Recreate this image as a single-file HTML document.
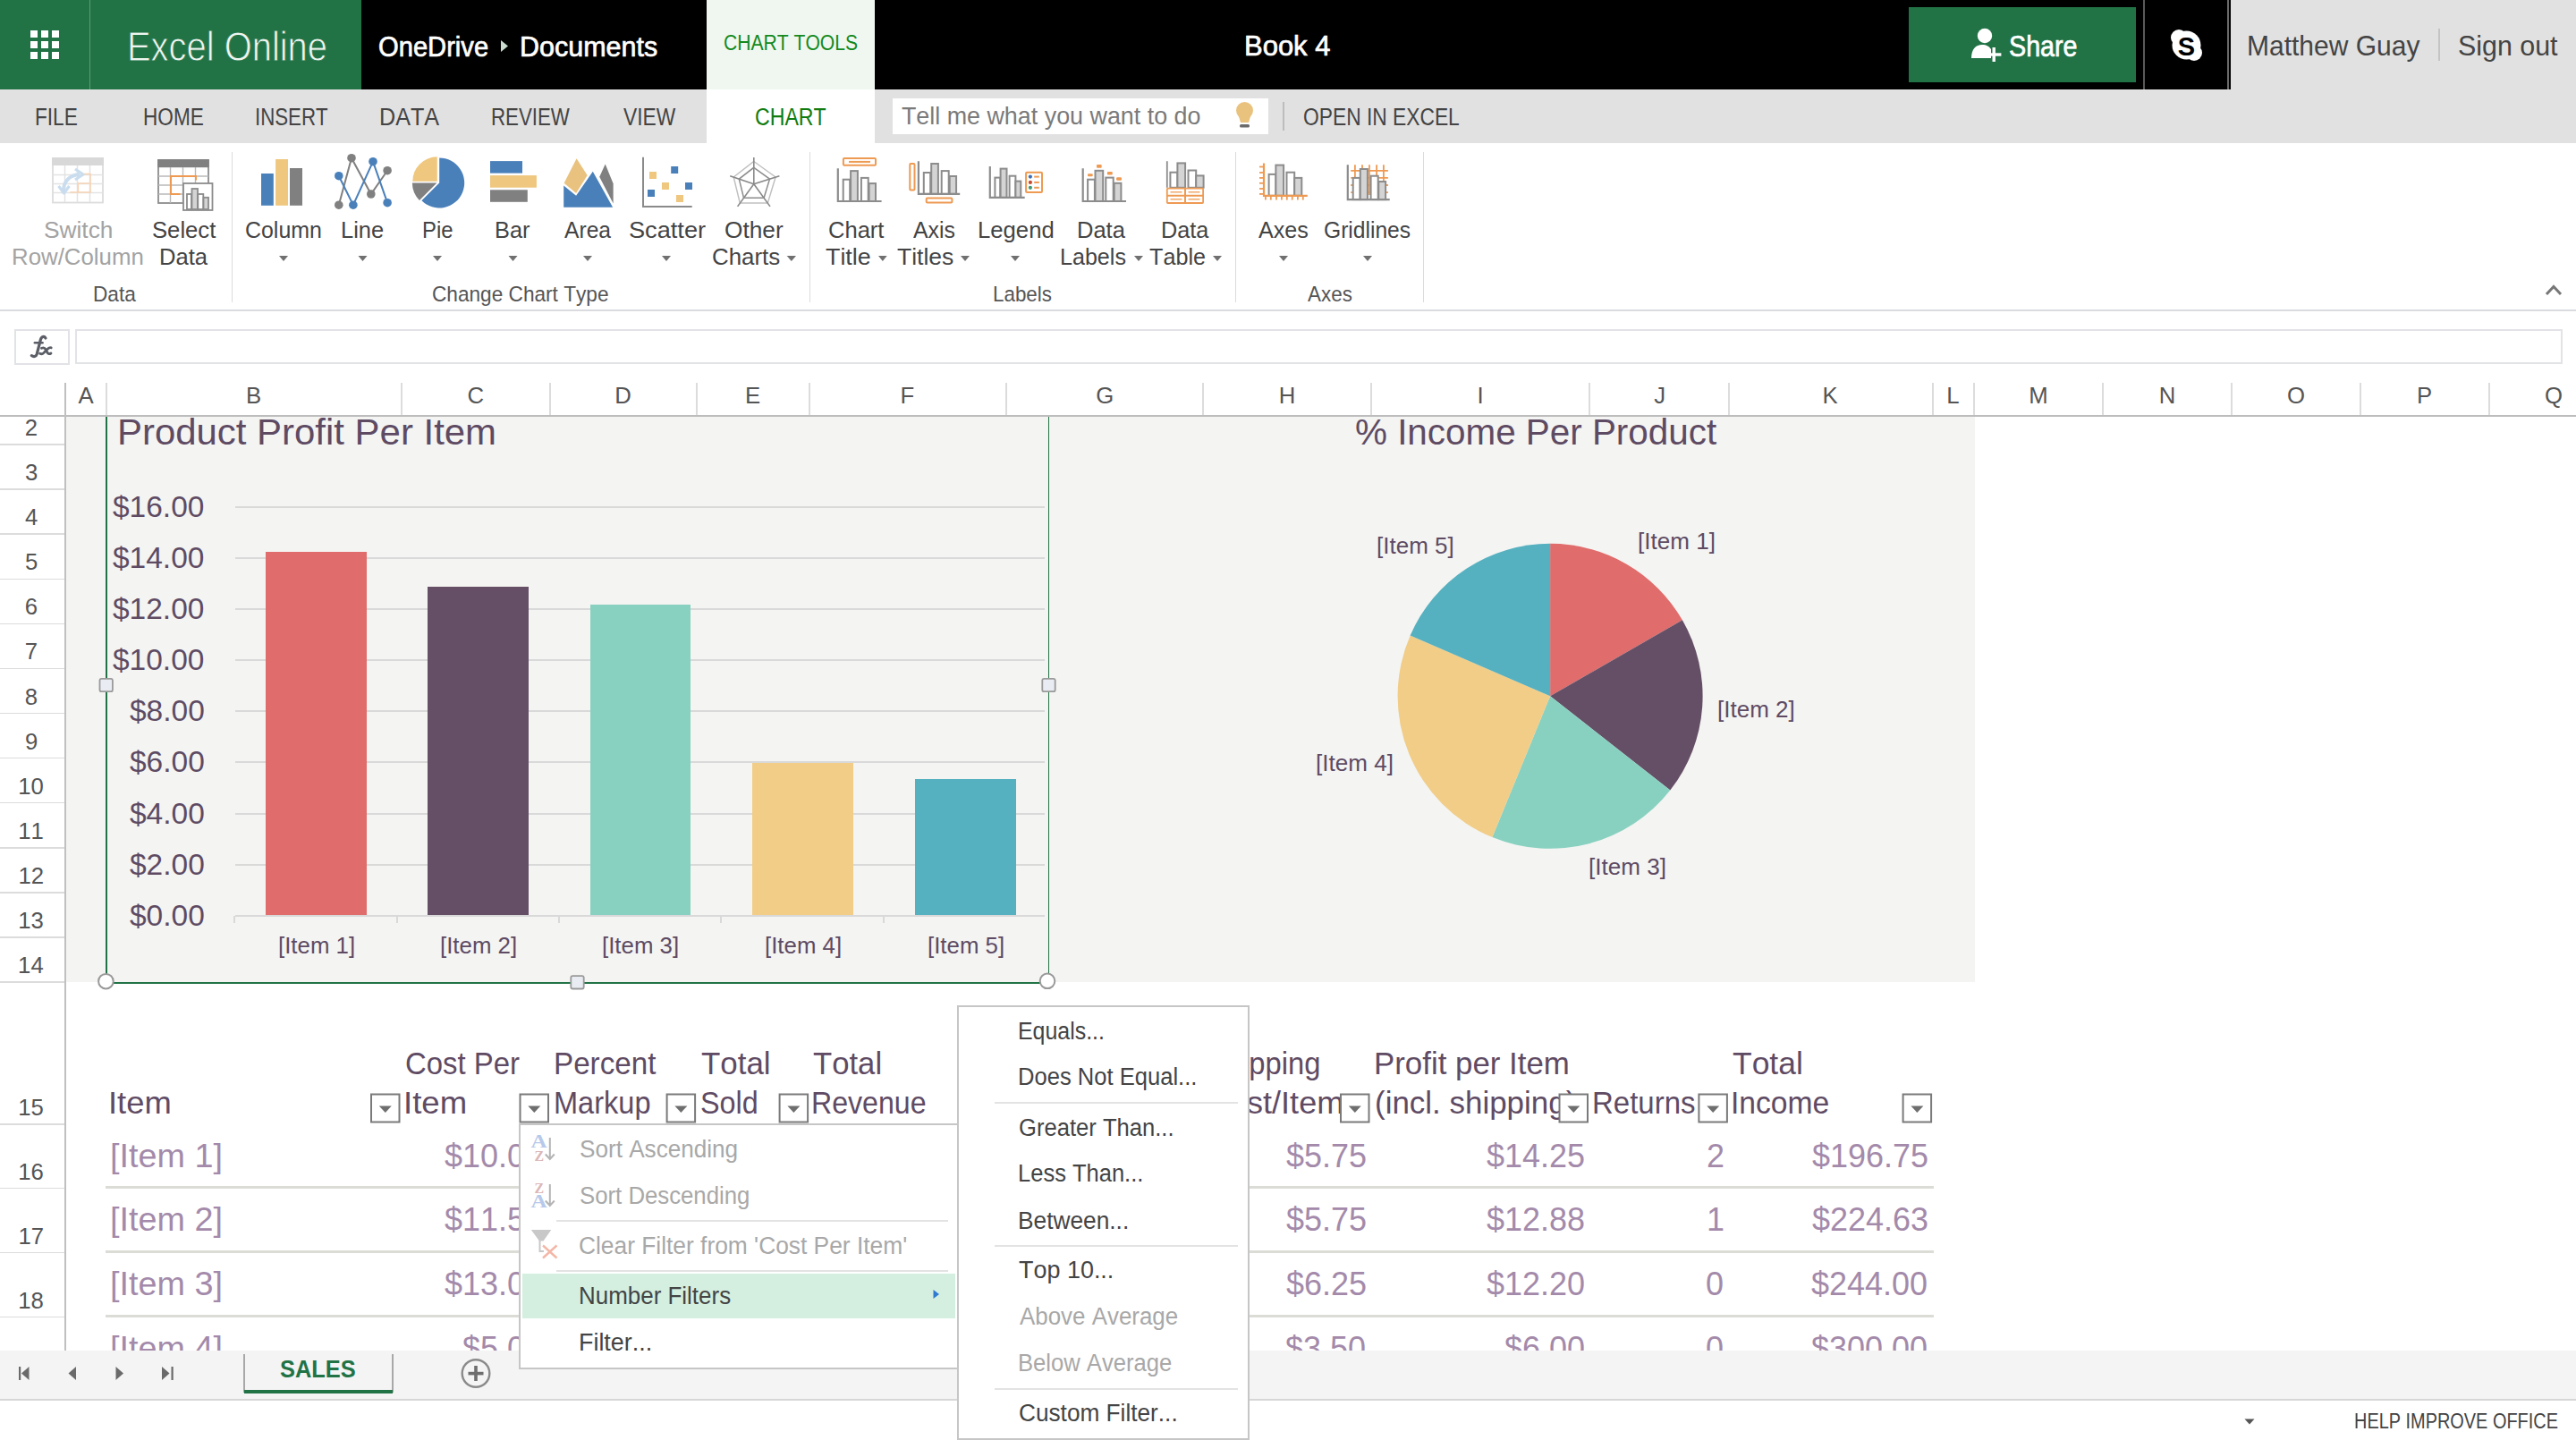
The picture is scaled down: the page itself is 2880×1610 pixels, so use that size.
<!DOCTYPE html>
<html><head><meta charset="utf-8"><style>
html,body{margin:0;padding:0;}
body{width:2880px;height:1610px;position:relative;overflow:hidden;background:#fff;font-family:"Liberation Sans",sans-serif;font-kerning:none;}
.t{position:absolute;white-space:pre;transform-origin:0 0;}
svg{overflow:visible;}
</style></head><body>

<div style="position:absolute;left:0.0px;top:0.0px;width:404.0px;height:100.0px;background:#217346;"></div>
<div style="position:absolute;left:100.0px;top:0.0px;width:1.0px;height:100.0px;background:#5c9c76;"></div>
<div style="position:absolute;left:34.0px;top:34.0px;width:8.0px;height:8.0px;background:#ffffff;"></div>
<div style="position:absolute;left:34.0px;top:46.0px;width:8.0px;height:8.0px;background:#ffffff;"></div>
<div style="position:absolute;left:34.0px;top:58.0px;width:8.0px;height:8.0px;background:#ffffff;"></div>
<div style="position:absolute;left:46.0px;top:34.0px;width:8.0px;height:8.0px;background:#ffffff;"></div>
<div style="position:absolute;left:46.0px;top:46.0px;width:8.0px;height:8.0px;background:#ffffff;"></div>
<div style="position:absolute;left:46.0px;top:58.0px;width:8.0px;height:8.0px;background:#ffffff;"></div>
<div style="position:absolute;left:58.0px;top:34.0px;width:8.0px;height:8.0px;background:#ffffff;"></div>
<div style="position:absolute;left:58.0px;top:46.0px;width:8.0px;height:8.0px;background:#ffffff;"></div>
<div style="position:absolute;left:58.0px;top:58.0px;width:8.0px;height:8.0px;background:#ffffff;"></div>
<div class="t" style="left:141.7px;top:29.2px;font-size:46.51px;line-height:46.51px;color:#eef5ef;transform:scaleX(0.8581);-webkit-text-stroke:0.9px #217346;paint-order:normal;">Excel Online</div>
<div style="position:absolute;left:404.0px;top:0.0px;width:2090.0px;height:100.0px;background:#000000;"></div>
<div class="t" style="left:423.1px;top:35.7px;font-size:31.98px;line-height:31.98px;color:#ffffff;transform:scaleX(0.9120);-webkit-text-stroke:0.7px #fff;">OneDrive</div>
<svg style="position:absolute;left:555px;top:40px;" width="20" height="22" viewBox="555 40 20 22"><path d="M560 45 L568 51.5 L560 58 Z" fill="#c9dccf"/></svg>
<div class="t" style="left:580.5px;top:35.7px;font-size:31.98px;line-height:31.98px;color:#ffffff;transform:scaleX(0.9535);-webkit-text-stroke:0.7px #fff;">Documents</div>
<div style="position:absolute;left:790.0px;top:0.0px;width:188.0px;height:100.0px;background:#eff7f0;"></div>
<div class="t" style="left:808.9px;top:36.6px;font-size:23.26px;line-height:23.26px;color:#14891c;transform:scaleX(0.9072);">CHART TOOLS</div>
<div class="t" style="left:1390.5px;top:35.3px;font-size:31.98px;line-height:31.98px;color:#ffffff;transform:scaleX(0.9688);-webkit-text-stroke:0.7px #fff;">Book 4</div>
<div style="position:absolute;left:2134.0px;top:8.0px;width:254.0px;height:84.0px;background:#217346;"></div>
<svg style="position:absolute;left:2200px;top:28px;" width="44" height="46" viewBox="2200 28 44 46"><circle cx="2219" cy="40" r="8.2" fill="#fff"/><path d="M2204 65 C2204 55 2209 50 2216 50 C2221 50 2224 52 2226 55 L2226 65 Z" fill="#fff"/><rect x="2227.5" y="53" width="3.4" height="16" fill="#fff"/><rect x="2221" y="59.3" width="16.4" height="3.4" fill="#fff"/><path d="M2226 55 L2222 60 L2222 65" stroke="#217346" stroke-width="0" fill="none"/></svg>
<div class="t" style="left:2245.7px;top:34.0px;font-size:34.01px;line-height:34.01px;color:#ffffff;transform:scaleX(0.8438);-webkit-text-stroke:0.7px #fff;">Share</div>
<div style="position:absolute;left:2396.0px;top:0.0px;width:2.0px;height:100.0px;background:#5a5a5a;"></div>
<svg style="position:absolute;left:2422px;top:28px;" width="46" height="46" viewBox="2422 28 46 46"><circle cx="2436" cy="42" r="9" fill="#fff"/><circle cx="2453" cy="59" r="9" fill="#fff"/><circle cx="2444.5" cy="50.5" r="16" fill="#fff"/><text x="2444.5" y="61.5" font-family="Liberation Sans" font-weight="bold" font-size="29" text-anchor="middle" fill="#000">S</text></svg>
<div style="position:absolute;left:2490.0px;top:0.0px;width:2.0px;height:100.0px;background:#6a6a6a;"></div>
<div style="position:absolute;left:2494.0px;top:0.0px;width:386.0px;height:100.0px;background:#e1e1e1;"></div>
<div class="t" style="left:2511.5px;top:35.3px;font-size:31.98px;line-height:31.98px;color:#444444;transform:scaleX(0.9387);">Matthew Guay</div>
<div style="position:absolute;left:2726.0px;top:32.0px;width:2.0px;height:36.0px;background:#c4c4c4;"></div>
<div class="t" style="left:2747.6px;top:35.3px;font-size:31.98px;line-height:31.98px;color:#444444;transform:scaleX(0.9511);">Sign out</div>
<div style="position:absolute;left:0.0px;top:100.0px;width:2880.0px;height:60.0px;background:#e1e1e1;"></div>
<div style="position:absolute;left:790.0px;top:100.0px;width:188.0px;height:60.0px;background:#ffffff;"></div>
<div class="t" style="left:39.1px;top:116.9px;font-size:27.62px;line-height:27.62px;color:#444444;transform:scaleX(0.8201);">FILE</div>
<div class="t" style="left:160.1px;top:116.9px;font-size:27.62px;line-height:27.62px;color:#444444;transform:scaleX(0.8187);">HOME</div>
<div class="t" style="left:284.9px;top:116.9px;font-size:27.62px;line-height:27.62px;color:#444444;transform:scaleX(0.8054);">INSERT</div>
<div class="t" style="left:423.9px;top:116.9px;font-size:27.62px;line-height:27.62px;color:#444444;transform:scaleX(0.9112);">DATA</div>
<div class="t" style="left:549.2px;top:116.9px;font-size:27.62px;line-height:27.62px;color:#444444;transform:scaleX(0.8069);">REVIEW</div>
<div class="t" style="left:696.9px;top:116.9px;font-size:27.62px;line-height:27.62px;color:#444444;transform:scaleX(0.8243);">VIEW</div>
<div class="t" style="left:843.8px;top:116.9px;font-size:27.62px;line-height:27.62px;color:#107c10;transform:scaleX(0.8380);">CHART</div>
<div style="position:absolute;left:998.0px;top:110.0px;width:420.0px;height:40.0px;background:#ffffff;"></div>
<div class="t" style="left:1007.9px;top:117.2px;font-size:26.89px;line-height:26.89px;color:#7a7a7a;">Tell me what you want to do</div>
<svg style="position:absolute;left:1376px;top:110px;" width="32" height="40" viewBox="1376 110 32 40"><circle cx="1391.5" cy="123.5" r="9.5" fill="#e9c27e"/><path d="M1384 127 L1399 127 L1396 137 L1387 137 Z" fill="#e9c27e"/><rect x="1386" y="139" width="11" height="3.5" rx="1.5" fill="#6b6b6b"/></svg>
<div style="position:absolute;left:1434.0px;top:114.0px;width:2.0px;height:32.0px;background:#bdbdbd;"></div>
<div class="t" style="left:1456.9px;top:116.9px;font-size:27.62px;line-height:27.62px;color:#444444;transform:scaleX(0.8255);">OPEN IN EXCEL</div>
<div style="position:absolute;left:0.0px;top:346.0px;width:2880.0px;height:2.0px;background:#dadbde;"></div>
<div style="position:absolute;left:258.5px;top:170.0px;width:1.5px;height:168.0px;background:#dcdcdc;"></div>
<div style="position:absolute;left:904.5px;top:170.0px;width:1.5px;height:168.0px;background:#dcdcdc;"></div>
<div style="position:absolute;left:1380.5px;top:170.0px;width:1.5px;height:168.0px;background:#dcdcdc;"></div>
<div style="position:absolute;left:1590.5px;top:170.0px;width:1.5px;height:168.0px;background:#dcdcdc;"></div>
<div class="t" style="left:48.8px;top:244.0px;font-size:26.16px;line-height:26.16px;color:#a3a3a3;transform:scaleX(1.0044);">Switch</div>
<div class="t" style="left:12.9px;top:273.8px;font-size:26.16px;line-height:26.16px;color:#a3a3a3;transform:scaleX(0.9869);">Row/Column</div>
<div class="t" style="left:169.8px;top:244.0px;font-size:26.16px;line-height:26.16px;color:#444444;transform:scaleX(0.9813);">Select</div>
<div class="t" style="left:177.9px;top:273.8px;font-size:26.16px;line-height:26.16px;color:#444444;transform:scaleX(0.9790);">Data</div>
<div class="t" style="left:273.7px;top:244.0px;font-size:26.16px;line-height:26.16px;color:#444444;transform:scaleX(0.9527);">Column</div>
<svg style="position:absolute;left:311px;top:285px;" width="13" height="9" viewBox="311 285 13 9"><path d="M312 286 L322 286 L317.0 292 Z" fill="#707070"/></svg>
<div class="t" style="left:380.9px;top:244.0px;font-size:26.16px;line-height:26.16px;color:#444444;transform:scaleX(0.9750);">Line</div>
<svg style="position:absolute;left:399px;top:285px;" width="13" height="9" viewBox="399 285 13 9"><path d="M400.5 286 L410.5 286 L405.5 292 Z" fill="#707070"/></svg>
<div class="t" style="left:471.5px;top:244.0px;font-size:26.16px;line-height:26.16px;color:#444444;transform:scaleX(0.9129);">Pie</div>
<svg style="position:absolute;left:483px;top:285px;" width="13" height="9" viewBox="483 285 13 9"><path d="M484 286 L494 286 L489.0 292 Z" fill="#707070"/></svg>
<div class="t" style="left:553.4px;top:244.0px;font-size:26.16px;line-height:26.16px;color:#444444;transform:scaleX(0.9677);">Bar</div>
<svg style="position:absolute;left:567px;top:285px;" width="13" height="9" viewBox="567 285 13 9"><path d="M568.5 286 L578.5 286 L573.5 292 Z" fill="#707070"/></svg>
<div class="t" style="left:631.0px;top:244.0px;font-size:26.16px;line-height:26.16px;color:#444444;transform:scaleX(0.9418);">Area</div>
<svg style="position:absolute;left:651px;top:285px;" width="13" height="9" viewBox="651 285 13 9"><path d="M652 286 L662 286 L657.0 292 Z" fill="#707070"/></svg>
<div class="t" style="left:702.8px;top:244.0px;font-size:26.16px;line-height:26.16px;color:#444444;transform:scaleX(1.0386);">Scatter</div>
<svg style="position:absolute;left:739px;top:285px;" width="13" height="9" viewBox="739 285 13 9"><path d="M740 286 L750 286 L745.0 292 Z" fill="#707070"/></svg>
<div class="t" style="left:809.8px;top:244.0px;font-size:26.16px;line-height:26.16px;color:#444444;transform:scaleX(1.0038);">Other</div>
<div class="t" style="left:795.7px;top:273.8px;font-size:26.16px;line-height:26.16px;color:#444444;transform:scaleX(0.9895);">Charts</div>
<svg style="position:absolute;left:878px;top:285px;" width="13" height="9" viewBox="878 285 13 9"><path d="M879.7 286 L890 286 L884.85 292 Z" fill="#707070"/></svg>
<div class="t" style="left:925.7px;top:244.0px;font-size:26.16px;line-height:26.16px;color:#444444;transform:scaleX(0.9767);">Chart</div>
<div class="t" style="left:923.2px;top:273.8px;font-size:26.16px;line-height:26.16px;color:#444444;transform:scaleX(1.0257);">Title</div>
<svg style="position:absolute;left:981px;top:285px;" width="12" height="9" viewBox="981 285 12 9"><path d="M982 286 L991.7 286 L986.85 292 Z" fill="#707070"/></svg>
<div class="t" style="left:1021.0px;top:244.0px;font-size:26.16px;line-height:26.16px;color:#444444;transform:scaleX(0.9498);">Axis</div>
<div class="t" style="left:1003.4px;top:273.8px;font-size:26.16px;line-height:26.16px;color:#444444;transform:scaleX(1.0135);">Titles</div>
<svg style="position:absolute;left:1073px;top:285px;" width="13" height="9" viewBox="1073 285 13 9"><path d="M1074 286 L1084 286 L1079.0 292 Z" fill="#707070"/></svg>
<div class="t" style="left:1092.6px;top:244.0px;font-size:26.16px;line-height:26.16px;color:#444444;transform:scaleX(0.9824);">Legend</div>
<svg style="position:absolute;left:1129px;top:285px;" width="13" height="9" viewBox="1129 285 13 9"><path d="M1130 286 L1140 286 L1135.0 292 Z" fill="#707070"/></svg>
<div class="t" style="left:1203.5px;top:244.0px;font-size:26.16px;line-height:26.16px;color:#444444;transform:scaleX(0.9752);">Data</div>
<div class="t" style="left:1184.9px;top:273.8px;font-size:26.16px;line-height:26.16px;color:#444444;transform:scaleX(0.9594);">Labels</div>
<svg style="position:absolute;left:1267px;top:285px;" width="13" height="9" viewBox="1267 285 13 9"><path d="M1268 286 L1278 286 L1273.0 292 Z" fill="#707070"/></svg>
<div class="t" style="left:1297.6px;top:244.0px;font-size:26.16px;line-height:26.16px;color:#444444;transform:scaleX(0.9658);">Data</div>
<div class="t" style="left:1285.1px;top:273.8px;font-size:26.16px;line-height:26.16px;color:#444444;transform:scaleX(0.9624);">Table</div>
<svg style="position:absolute;left:1355px;top:285px;" width="13" height="9" viewBox="1355 285 13 9"><path d="M1356 286 L1366 286 L1361.0 292 Z" fill="#707070"/></svg>
<div class="t" style="left:1406.6px;top:244.0px;font-size:26.16px;line-height:26.16px;color:#444444;transform:scaleX(0.9603);">Axes</div>
<svg style="position:absolute;left:1429px;top:285px;" width="13" height="9" viewBox="1429 285 13 9"><path d="M1430 286 L1440 286 L1435.0 292 Z" fill="#707070"/></svg>
<div class="t" style="left:1479.8px;top:244.0px;font-size:26.16px;line-height:26.16px;color:#444444;transform:scaleX(0.9409);">Gridlines</div>
<svg style="position:absolute;left:1523px;top:285px;" width="13" height="9" viewBox="1523 285 13 9"><path d="M1524 286 L1534 286 L1529.0 292 Z" fill="#707070"/></svg>
<div class="t" style="left:104.1px;top:318.1px;font-size:23.26px;line-height:23.26px;color:#555555;transform:scaleX(0.9743);">Data</div>
<div class="t" style="left:482.9px;top:318.1px;font-size:23.26px;line-height:23.26px;color:#555555;transform:scaleX(0.9734);">Change Chart Type</div>
<div class="t" style="left:1109.7px;top:318.1px;font-size:23.26px;line-height:23.26px;color:#555555;transform:scaleX(0.9623);">Labels</div>
<div class="t" style="left:1462.0px;top:318.1px;font-size:23.26px;line-height:23.26px;color:#555555;transform:scaleX(0.9643);">Axes</div>
<svg style="position:absolute;left:2840px;top:312px;" width="30" height="24" viewBox="2840 312 30 24"><path d="M2847 329 L2855 320.5 L2863 329" stroke="#777" stroke-width="3" fill="none"/></svg>
<svg style="position:absolute;left:55px;top:173px;" width="64" height="58" viewBox="55 173 64 58"><rect x="59" y="177" width="56" height="49.5" fill="#fff" stroke="#dcdcdc" stroke-width="1.8"/><rect x="58" y="176" width="58" height="9" fill="#d8d8d8"/><line x1="59" y1="195.5" x2="115" y2="195.5" stroke="#e3e3e3" stroke-width="1.5"/><line x1="59" y1="205.5" x2="115" y2="205.5" stroke="#e3e3e3" stroke-width="1.5"/><line x1="59" y1="215.5" x2="115" y2="215.5" stroke="#e3e3e3" stroke-width="1.5"/><line x1="72.5" y1="185" x2="72.5" y2="226" stroke="#e3e3e3" stroke-width="1.5"/><line x1="86.5" y1="185" x2="86.5" y2="226" stroke="#e3e3e3" stroke-width="1.5"/><line x1="100.5" y1="185" x2="100.5" y2="226" stroke="#e3e3e3" stroke-width="1.5"/><path d="M78.3 215 L101 215 L101 194.5 L94 194.5 M87.3 215 L87.3 205 L101 205" fill="none" stroke="#f7d3b5" stroke-width="1.6"/><path d="M71 213 C71 203 78 195.5 89 195" stroke="#c9ddef" stroke-width="4" fill="none"/><path d="M84 189 L93 195 L84 201" stroke="#c9ddef" stroke-width="3.2" fill="none" stroke-linejoin="round"/><path d="M65.5 208 L71.5 216 L77.5 208" stroke="#c9ddef" stroke-width="3.2" fill="none" stroke-linejoin="round"/></svg>
<svg style="position:absolute;left:173px;top:174px;" width="68" height="64" viewBox="173 174 68 64"><rect x="177" y="179" width="56" height="48" fill="#fff" stroke="#8c8c8c" stroke-width="1.8"/><rect x="176.2" y="178.2" width="57.5" height="9" fill="#808080"/><line x1="177" y1="197" x2="233" y2="197" stroke="#b8b8b8" stroke-width="1.4"/><line x1="177" y1="207" x2="233" y2="207" stroke="#b8b8b8" stroke-width="1.4"/><line x1="177" y1="217" x2="233" y2="217" stroke="#b8b8b8" stroke-width="1.4"/><line x1="190.5" y1="187" x2="190.5" y2="227" stroke="#b8b8b8" stroke-width="1.4"/><line x1="204.5" y1="187" x2="204.5" y2="227" stroke="#b8b8b8" stroke-width="1.4"/><line x1="218.5" y1="187" x2="218.5" y2="227" stroke="#b8b8b8" stroke-width="1.4"/><path d="M219 201.5 L219 197 L191 197 L191 217 L201.5 217" stroke="#ee9a52" stroke-width="2" fill="none"/><rect x="205" y="205" width="32.5" height="30" fill="#fff" stroke="#8c8c8c" stroke-width="1.8"/><rect x="209" y="217" width="5" height="17" fill="#fff" stroke="#8c8c8c" stroke-width="1.8"/><rect x="214.5" y="211" width="6.5" height="23" fill="#d4d4d4" stroke="#8c8c8c" stroke-width="1.8"/><rect x="221.3" y="217" width="6" height="17" fill="#fff" stroke="#8c8c8c" stroke-width="1.8"/><rect x="227.5" y="220.8" width="5.5" height="13.2" fill="#d4d4d4" stroke="#8c8c8c" stroke-width="1.8"/></svg>
<svg style="position:absolute;left:290px;top:176px;" width="50" height="56" viewBox="290 176 50 56"><rect x="292" y="194" width="13.8" height="35.8" fill="#4a80ba"/><rect x="308.1" y="178" width="13.9" height="51.8" fill="#efc77e"/><rect x="324" y="188" width="14" height="41.8" fill="#808080"/></svg>
<svg style="position:absolute;left:370px;top:168px;" width="70" height="68" viewBox="370 168 70 68"><polyline points="378.8,229.2 393,176.7 414.8,217 433.1,190.7" stroke="#808080" stroke-width="2" fill="none"/><polyline points="378.8,196.7 394.9,229.2 417,180.7 433.1,226.7" stroke="#4a80ba" stroke-width="2" fill="none"/><circle cx="393" cy="176.7" r="4.8" fill="#808080"/><circle cx="378.8" cy="229.2" r="4.8" fill="#808080"/><circle cx="414.8" cy="217" r="4.8" fill="#808080"/><circle cx="433.1" cy="190.7" r="4.8" fill="#808080"/><circle cx="378.8" cy="196.7" r="4.8" fill="#4a80ba"/><circle cx="394.9" cy="229.2" r="4.8" fill="#4a80ba"/><circle cx="417" cy="180.7" r="4.8" fill="#4a80ba"/><circle cx="433.1" cy="226.7" r="4.8" fill="#4a80ba"/></svg>
<svg style="position:absolute;left:458px;top:172px;" width="64" height="64" viewBox="458 172 64 64"><path d="M491.19 204.47 L491.19 176.47 A28 28 0 1 1 471.39 224.27 Z" fill="#4a80ba"/><path d="M488.41 204.47 L468.97 223.92 A27.5 27.5 0 0 1 460.91 204.47 Z" fill="#808080"/><path d="M488.74 202.84 L461.24 202.84 A27.5 27.5 0 0 1 488.74 175.34 Z" fill="#efc77e"/></svg>
<svg style="position:absolute;left:545px;top:176px;" width="58" height="54" viewBox="545 176 58 54"><rect x="548" y="180.1" width="36" height="13.5" fill="#4a80ba"/><rect x="548" y="196.1" width="51.9" height="13.6" fill="#efc77e"/><rect x="548" y="212.3" width="41.8" height="13.5" fill="#808080"/></svg>
<svg style="position:absolute;left:626px;top:174px;" width="64" height="62" viewBox="626 174 64 62"><path d="M630.6 204.8 L644.6 177.3 L656.7 196 L644.1 216 Z" fill="#eac27f"/><path d="M676.7 183.4 L685.6 205.3 L685.6 227.6 L670.2 197.8 Z" fill="#808080"/><path d="M630.2 207.6 L644.1 218.8 L662.8 191.8 L685.1 231.8 L630.2 231.8 Z" fill="#4a80ba"/></svg>
<svg style="position:absolute;left:714px;top:172px;" width="64" height="64" viewBox="714 172 64 64"><path d="M719 175.7 L719 231 L773.7 231" stroke="#8a8a8a" stroke-width="2" fill="none"/><rect x="726" y="192" width="8" height="8" fill="#efc77e"/><rect x="750.2" y="186" width="8" height="8" fill="#4a80ba"/><rect x="740" y="204" width="8" height="8" fill="#efc77e"/><rect x="766" y="204" width="8" height="8" fill="#4a80ba"/><rect x="724" y="212" width="8" height="8" fill="#4a80ba"/><rect x="756" y="218" width="8" height="8" fill="#efc77e"/></svg>
<svg style="position:absolute;left:812px;top:172px;" width="64" height="64" viewBox="812 172 64 64"><line x1="842.8" y1="205.7" x2="842.8" y2="176" stroke="#888" stroke-width="1.6"/><line x1="842.8" y1="205.7" x2="871.4" y2="196.7" stroke="#888" stroke-width="1.6"/><line x1="842.8" y1="205.7" x2="861" y2="230.9" stroke="#888" stroke-width="1.6"/><line x1="842.8" y1="205.7" x2="824.6" y2="230.9" stroke="#888" stroke-width="1.6"/><line x1="842.8" y1="205.7" x2="816.2" y2="196.7" stroke="#888" stroke-width="1.6"/><polygon points="842.8,187.3 860.5,200.1 854.1,221.3 831.5,221.3 826.3,200.1" stroke="#8c8c8c" stroke-opacity="1.0" stroke-width="1.5" fill="none"/><polygon points="842.8,180.5 867.1,198.0 858.3,227.1 827.3,227.1 820.2,198.0" stroke="#8c8c8c" stroke-opacity="0.55" stroke-width="1.5" fill="none"/></svg>
<svg style="position:absolute;left:932px;top:172px;" width="60" height="60" viewBox="932 172 60 60"><rect x="942.9" y="176.9" width="36.1" height="7.9" rx="1" fill="#fff" stroke="#ee9a52" stroke-width="2"/><line x1="949" y1="180.9" x2="973" y2="180.9" stroke="#ee9a52" stroke-width="2"/><rect x="942.7" y="200.7" width="7.5" height="24.30000000000001" fill="#fff" stroke="#8c8c8c" stroke-width="2.0"/><rect x="951.1" y="191.1" width="7.7999999999999545" height="33.900000000000006" fill="#d4d4d4" stroke="#8c8c8c" stroke-width="2.0"/><rect x="962.9" y="198.9" width="7.800000000000068" height="26.099999999999994" fill="#fff" stroke="#8c8c8c" stroke-width="2.0"/><rect x="971.6" y="205.1" width="7.399999999999977" height="19.900000000000006" fill="#d4d4d4" stroke="#8c8c8c" stroke-width="2.0"/><path d="M936.8 188.3 L936.8 225 L985.6 225" stroke="#8c8c8c" stroke-width="2.2" fill="none"/></svg>
<svg style="position:absolute;left:1012px;top:172px;" width="66" height="60" viewBox="1012 172 66 60"><rect x="1017.3" y="183.1" width="5.2" height="29.4" rx="1" fill="#fff" stroke="#ee9a52" stroke-width="2"/><rect x="1032.8" y="193" width="7.400000000000091" height="23.900000000000006" fill="#fff" stroke="#8c8c8c" stroke-width="2.0"/><rect x="1041.2" y="183" width="7.7000000000000455" height="33.900000000000006" fill="#d4d4d4" stroke="#8c8c8c" stroke-width="2.0"/><rect x="1052.7" y="191.1" width="8.0" height="25.80000000000001" fill="#fff" stroke="#8c8c8c" stroke-width="2.0"/><rect x="1061.7" y="197" width="7.399999999999864" height="19.900000000000006" fill="#d4d4d4" stroke="#8c8c8c" stroke-width="2.0"/><path d="M1026.9 180.2 L1026.9 216.9 L1073.2 216.9" stroke="#8c8c8c" stroke-width="2.2" fill="none"/><rect x="1035.7" y="221.6" width="28.7" height="4.8" rx="1" fill="#fff" stroke="#ee9a52" stroke-width="2"/></svg>
<svg style="position:absolute;left:1102px;top:182px;" width="68" height="44" viewBox="1102 182 68 44"><rect x="1112.4" y="198.6" width="5.899999999999864" height="22.30000000000001" fill="#fff" stroke="#8c8c8c" stroke-width="2.0"/><rect x="1118.6" y="188.6" width="6.900000000000091" height="32.30000000000001" fill="#d4d4d4" stroke="#8c8c8c" stroke-width="2.0"/><rect x="1128.6" y="196.7" width="6.800000000000182" height="24.200000000000017" fill="#fff" stroke="#8c8c8c" stroke-width="2.0"/><rect x="1135.4" y="202.6" width="5.899999999999864" height="18.30000000000001" fill="#d4d4d4" stroke="#8c8c8c" stroke-width="2.0"/><path d="M1106.8 186.1 L1106.8 220.9 L1145.7 220.9" stroke="#8c8c8c" stroke-width="2.2" fill="none"/><rect x="1147.1" y="192.8" width="17.9" height="22.1" rx="1" fill="#fff" stroke="#ee9a52" stroke-width="2"/><circle cx="1151.9" cy="197.6" r="2.1" fill="#3b6eb4"/><line x1="1156.2" y1="197.6" x2="1161.8" y2="197.6" stroke="#ee9a52" stroke-width="2"/><circle cx="1151.9" cy="203.9" r="2.1" fill="#c8492e"/><line x1="1156.2" y1="203.9" x2="1161.8" y2="203.9" stroke="#ee9a52" stroke-width="2"/><circle cx="1151.9" cy="209.8" r="2.1" fill="#3f9a74"/><line x1="1156.2" y1="209.8" x2="1161.8" y2="209.8" stroke="#ee9a52" stroke-width="2"/></svg>
<svg style="position:absolute;left:1206px;top:180px;" width="58" height="50" viewBox="1206 180 58 50"><rect x="1216.1" y="200.7" width="7.800000000000182" height="24.30000000000001" fill="#fff" stroke="#8c8c8c" stroke-width="2.0"/><rect x="1224.5" y="190.8" width="8.700000000000045" height="34.19999999999999" fill="#d4d4d4" stroke="#8c8c8c" stroke-width="2.0"/><rect x="1236.3" y="198.6" width="8.400000000000091" height="26.400000000000006" fill="#fff" stroke="#8c8c8c" stroke-width="2.0"/><rect x="1245.7" y="204.8" width="7.7000000000000455" height="20.19999999999999" fill="#d4d4d4" stroke="#8c8c8c" stroke-width="2.0"/><path d="M1210.7 188.3 L1210.7 225 L1259 225" stroke="#8c8c8c" stroke-width="2.2" fill="none"/><rect x="1216" y="194.2" width="5.7000000000000455" height="3.1000000000000227" rx="1" fill="#ee9a52"/><rect x="1226" y="184" width="5.7000000000000455" height="3.6999999999999886" rx="1" fill="#ee9a52"/><rect x="1237.9" y="192" width="5.899999999999864" height="3.5" rx="1" fill="#ee9a52"/><rect x="1248.1" y="198.3" width="5.900000000000091" height="3.3999999999999773" rx="1" fill="#ee9a52"/></svg>
<svg style="position:absolute;left:1300px;top:176px;" width="50" height="56" viewBox="1300 176 50 56"><rect x="1308.4" y="192.7" width="8.0" height="17.100000000000023" fill="#fff" stroke="#8c8c8c" stroke-width="2.0"/><rect x="1316.4" y="182.4" width="8.699999999999818" height="27.400000000000006" fill="#d4d4d4" stroke="#8c8c8c" stroke-width="2.0"/><rect x="1328.5" y="190.5" width="8.700000000000045" height="19.30000000000001" fill="#fff" stroke="#8c8c8c" stroke-width="2.0"/><rect x="1337.2" y="196.4" width="8.399999999999864" height="13.400000000000006" fill="#d4d4d4" stroke="#8c8c8c" stroke-width="2.0"/><line x1="1304.8" y1="180.2" x2="1304.8" y2="209.8" stroke="#8c8c8c" stroke-width="1.8"/><rect x="1304.8" y="210.6" width="40.3" height="16.4" rx="1" fill="#fff" stroke="#ee9a52" stroke-width="1.8"/><line x1="1325" y1="210.6" x2="1325" y2="227" stroke="#ee9a52" stroke-width="2"/><line x1="1304.8" y1="218.8" x2="1345" y2="218.8" stroke="#ee9a52" stroke-width="2"/><line x1="1308.5" y1="214.8" x2="1321.5" y2="214.8" stroke="#ee9a52" stroke-width="1.3"/><line x1="1308.5" y1="222.8" x2="1321.5" y2="222.8" stroke="#ee9a52" stroke-width="1.3"/><line x1="1328.5" y1="214.8" x2="1341.5" y2="214.8" stroke="#ee9a52" stroke-width="1.3"/><line x1="1328.5" y1="222.8" x2="1341.5" y2="222.8" stroke="#ee9a52" stroke-width="1.3"/></svg>
<svg style="position:absolute;left:1404px;top:178px;" width="62" height="50" viewBox="1404 178 62 50"><rect x="1418.6" y="194.9" width="7.800000000000182" height="23.900000000000006" fill="#fff" stroke="#8c8c8c" stroke-width="2.0"/><rect x="1426.4" y="184.6" width="8.699999999999818" height="34.20000000000002" fill="#d4d4d4" stroke="#8c8c8c" stroke-width="2.0"/><rect x="1438.5" y="192.7" width="8.700000000000045" height="26.100000000000023" fill="#fff" stroke="#8c8c8c" stroke-width="2.0"/><rect x="1447.2" y="198.9" width="8.099999999999909" height="19.900000000000006" fill="#d4d4d4" stroke="#8c8c8c" stroke-width="2.0"/><path d="M1413 182.5 L1413 218.8 L1461.8 218.8" stroke="#ee9a52" stroke-width="2.2" fill="none"/><line x1="1408" y1="186.5" x2="1413" y2="186.5" stroke="#ee9a52" stroke-width="1.8"/><line x1="1408" y1="193" x2="1413" y2="193" stroke="#ee9a52" stroke-width="1.8"/><line x1="1408" y1="198.9" x2="1413" y2="198.9" stroke="#ee9a52" stroke-width="1.8"/><line x1="1408" y1="204.8" x2="1413" y2="204.8" stroke="#ee9a52" stroke-width="1.8"/><line x1="1408" y1="211" x2="1413" y2="211" stroke="#ee9a52" stroke-width="1.8"/><line x1="1408" y1="216.9" x2="1413" y2="216.9" stroke="#ee9a52" stroke-width="1.8"/><line x1="1414.9" y1="218.8" x2="1414.9" y2="223.6" stroke="#ee9a52" stroke-width="1.8"/><line x1="1420.8" y1="218.8" x2="1420.8" y2="223.6" stroke="#ee9a52" stroke-width="1.8"/><line x1="1427" y1="218.8" x2="1427" y2="223.6" stroke="#ee9a52" stroke-width="1.8"/><line x1="1432.9" y1="218.8" x2="1432.9" y2="223.6" stroke="#ee9a52" stroke-width="1.8"/><line x1="1438.8" y1="218.8" x2="1438.8" y2="223.6" stroke="#ee9a52" stroke-width="1.8"/><line x1="1444.7" y1="218.8" x2="1444.7" y2="223.6" stroke="#ee9a52" stroke-width="1.8"/><line x1="1450.9" y1="218.8" x2="1450.9" y2="223.6" stroke="#ee9a52" stroke-width="1.8"/><line x1="1456.8" y1="218.8" x2="1456.8" y2="223.6" stroke="#ee9a52" stroke-width="1.8"/></svg>
<svg style="position:absolute;left:1502px;top:180px;" width="56" height="48" viewBox="1502 180 56 48"><line x1="1514.9" y1="184.3" x2="1514.9" y2="218" stroke="#ee9a52" stroke-width="1.8"/><line x1="1523" y1="184.3" x2="1523" y2="218" stroke="#ee9a52" stroke-width="1.8"/><line x1="1531" y1="184.3" x2="1531" y2="218" stroke="#ee9a52" stroke-width="1.8"/><line x1="1539.1" y1="184.3" x2="1539.1" y2="218" stroke="#ee9a52" stroke-width="1.8"/><line x1="1546.9" y1="184.3" x2="1546.9" y2="218" stroke="#ee9a52" stroke-width="1.8"/><line x1="1510.2" y1="190.8" x2="1551.9" y2="190.8" stroke="#ee9a52" stroke-width="1.8"/><line x1="1510.2" y1="198.9" x2="1551.9" y2="198.9" stroke="#ee9a52" stroke-width="1.8"/><line x1="1510.2" y1="207" x2="1551.9" y2="207" stroke="#ee9a52" stroke-width="1.8"/><line x1="1510.2" y1="215.1" x2="1551.9" y2="215.1" stroke="#ee9a52" stroke-width="1.8"/><rect x="1512.7" y="198.9" width="7.7999999999999545" height="24.19999999999999" fill="#fff" stroke="#8c8c8c" stroke-width="2.0"/><rect x="1520.8" y="189" width="8.100000000000136" height="34.099999999999994" fill="#d4d4d4" stroke="#8c8c8c" stroke-width="2.0"/><rect x="1532.6" y="196.7" width="8.100000000000136" height="26.400000000000006" fill="#fff" stroke="#8c8c8c" stroke-width="2.0"/><rect x="1541.3" y="203" width="7.7999999999999545" height="20.099999999999994" fill="#d4d4d4" stroke="#8c8c8c" stroke-width="2.0"/><path d="M1506.8 184.3 L1506.8 223.1 L1553.7 223.1" stroke="#8c8c8c" stroke-width="2.2" fill="none"/></svg>
<div style="position:absolute;left:16px;top:368px;width:58px;height:36px;border:2px solid #e2e3e6;background:#fff"></div>
<div style="position:absolute;left:84px;top:368px;width:2777px;height:35px;border:2px solid #e2e3e6;background:#fff"></div>
<svg style="position:absolute;left:30px;top:372px;" width="32" height="32" viewBox="30 372 32 32"><g stroke="#5b5e66" fill="none" stroke-linecap="round"><path d="M51 378 C49.5 375.5 46.5 375.8 45.3 380 L41.2 396 C40.2 399 37.5 399.3 35.3 397.6" stroke-width="3.2"/><line x1="38.8" y1="383.2" x2="47.6" y2="383.2" stroke-width="2.4"/><path d="M46.5 389.3 C48.8 388.3 50.2 389 51.2 391 L52.8 394 C53.8 395.8 55.5 396 57 395" stroke-width="2.8"/><path d="M57.2 388.8 C55.5 388 54.2 388.8 52.5 390.8 L48.8 394.6 C47.5 396 46 396 44.6 395.2" stroke-width="2.8"/></g></svg>
<div style="position:absolute;left:118.2px;top:428.0px;width:1.5px;height:37.0px;background:#dcdcdc;"></div>
<div style="position:absolute;left:448.2px;top:428.0px;width:1.5px;height:37.0px;background:#dcdcdc;"></div>
<div style="position:absolute;left:614.2px;top:428.0px;width:1.5px;height:37.0px;background:#dcdcdc;"></div>
<div style="position:absolute;left:778.2px;top:428.0px;width:1.5px;height:37.0px;background:#dcdcdc;"></div>
<div style="position:absolute;left:904.2px;top:428.0px;width:1.5px;height:37.0px;background:#dcdcdc;"></div>
<div style="position:absolute;left:1124.2px;top:428.0px;width:1.5px;height:37.0px;background:#dcdcdc;"></div>
<div style="position:absolute;left:1344.2px;top:428.0px;width:1.5px;height:37.0px;background:#dcdcdc;"></div>
<div style="position:absolute;left:1532.2px;top:428.0px;width:1.5px;height:37.0px;background:#dcdcdc;"></div>
<div style="position:absolute;left:1776.2px;top:428.0px;width:1.5px;height:37.0px;background:#dcdcdc;"></div>
<div style="position:absolute;left:1932.2px;top:428.0px;width:1.5px;height:37.0px;background:#dcdcdc;"></div>
<div style="position:absolute;left:2160.2px;top:428.0px;width:1.5px;height:37.0px;background:#dcdcdc;"></div>
<div style="position:absolute;left:2206.2px;top:428.0px;width:1.5px;height:37.0px;background:#dcdcdc;"></div>
<div style="position:absolute;left:2350.2px;top:428.0px;width:1.5px;height:37.0px;background:#dcdcdc;"></div>
<div style="position:absolute;left:2494.2px;top:428.0px;width:1.5px;height:37.0px;background:#dcdcdc;"></div>
<div style="position:absolute;left:2638.2px;top:428.0px;width:1.5px;height:37.0px;background:#dcdcdc;"></div>
<div style="position:absolute;left:2782.2px;top:428.0px;width:1.5px;height:37.0px;background:#dcdcdc;"></div>
<div style="position:absolute;left:2926.2px;top:428.0px;width:1.5px;height:37.0px;background:#dcdcdc;"></div>
<div style="position:absolute;left:72.5px;top:428.0px;width:1.5px;height:37.0px;background:#dcdcdc;"></div>
<div class="t" style="left:87.4px;top:430.3px;font-size:25.73px;line-height:25.73px;color:#555555;">A</div>
<div class="t" style="left:275.0px;top:430.3px;font-size:25.73px;line-height:25.73px;color:#555555;">B</div>
<div class="t" style="left:522.5px;top:430.3px;font-size:25.73px;line-height:25.73px;color:#555555;">C</div>
<div class="t" style="left:687.3px;top:430.3px;font-size:25.73px;line-height:25.73px;color:#555555;">D</div>
<div class="t" style="left:832.9px;top:430.3px;font-size:25.73px;line-height:25.73px;color:#555555;">E</div>
<div class="t" style="left:1006.6px;top:430.3px;font-size:25.73px;line-height:25.73px;color:#555555;">F</div>
<div class="t" style="left:1225.3px;top:430.3px;font-size:25.73px;line-height:25.73px;color:#555555;">G</div>
<div class="t" style="left:1429.7px;top:430.3px;font-size:25.73px;line-height:25.73px;color:#555555;">H</div>
<div class="t" style="left:1651.4px;top:430.3px;font-size:25.73px;line-height:25.73px;color:#555555;">I</div>
<div class="t" style="left:1849.3px;top:430.3px;font-size:25.73px;line-height:25.73px;color:#555555;">J</div>
<div class="t" style="left:2037.5px;top:430.3px;font-size:25.73px;line-height:25.73px;color:#555555;">K</div>
<div class="t" style="left:2176.2px;top:430.3px;font-size:25.73px;line-height:25.73px;color:#555555;">L</div>
<div class="t" style="left:2268.3px;top:430.3px;font-size:25.73px;line-height:25.73px;color:#555555;">M</div>
<div class="t" style="left:2413.7px;top:430.3px;font-size:25.73px;line-height:25.73px;color:#555555;">N</div>
<div class="t" style="left:2557.0px;top:430.3px;font-size:25.73px;line-height:25.73px;color:#555555;">O</div>
<div class="t" style="left:2702.0px;top:430.3px;font-size:25.73px;line-height:25.73px;color:#555555;">P</div>
<div class="t" style="left:2845.0px;top:430.3px;font-size:25.73px;line-height:25.73px;color:#555555;">Q</div>
<div style="position:absolute;left:0.0px;top:464.0px;width:2880.0px;height:2.0px;background:#bdbdbd;"></div>
<div style="position:absolute;left:72.0px;top:428.0px;width:2.0px;height:1082.0px;background:#c0c0c0;"></div>
<div style="position:absolute;left:0.0px;top:496.2px;width:72.0px;height:1.5px;background:#dcdcdc;"></div>
<div class="t" style="left:27.8px;top:466.0px;font-size:25.73px;line-height:25.73px;color:#555555;">2</div>
<div style="position:absolute;left:0.0px;top:546.3px;width:72.0px;height:1.5px;background:#dcdcdc;"></div>
<div class="t" style="left:27.9px;top:516.1px;font-size:25.73px;line-height:25.73px;color:#555555;">3</div>
<div style="position:absolute;left:0.0px;top:596.4px;width:72.0px;height:1.5px;background:#dcdcdc;"></div>
<div class="t" style="left:27.9px;top:566.2px;font-size:25.73px;line-height:25.73px;color:#555555;">4</div>
<div style="position:absolute;left:0.0px;top:646.5px;width:72.0px;height:1.5px;background:#dcdcdc;"></div>
<div class="t" style="left:27.9px;top:616.3px;font-size:25.73px;line-height:25.73px;color:#555555;">5</div>
<div style="position:absolute;left:0.0px;top:696.6px;width:72.0px;height:1.5px;background:#dcdcdc;"></div>
<div class="t" style="left:27.8px;top:666.3px;font-size:25.73px;line-height:25.73px;color:#555555;">6</div>
<div style="position:absolute;left:0.0px;top:746.7px;width:72.0px;height:1.5px;background:#dcdcdc;"></div>
<div class="t" style="left:27.8px;top:716.4px;font-size:25.73px;line-height:25.73px;color:#555555;">7</div>
<div style="position:absolute;left:0.0px;top:796.7px;width:72.0px;height:1.5px;background:#dcdcdc;"></div>
<div class="t" style="left:27.8px;top:766.5px;font-size:25.73px;line-height:25.73px;color:#555555;">8</div>
<div style="position:absolute;left:0.0px;top:846.8px;width:72.0px;height:1.5px;background:#dcdcdc;"></div>
<div class="t" style="left:27.9px;top:816.6px;font-size:25.73px;line-height:25.73px;color:#555555;">9</div>
<div style="position:absolute;left:0.0px;top:896.9px;width:72.0px;height:1.5px;background:#dcdcdc;"></div>
<div class="t" style="left:20.2px;top:866.7px;font-size:25.73px;line-height:25.73px;color:#555555;">10</div>
<div style="position:absolute;left:0.0px;top:947.0px;width:72.0px;height:1.5px;background:#dcdcdc;"></div>
<div class="t" style="left:20.3px;top:916.7px;font-size:25.73px;line-height:25.73px;color:#555555;">11</div>
<div style="position:absolute;left:0.0px;top:997.1px;width:72.0px;height:1.5px;background:#dcdcdc;"></div>
<div class="t" style="left:20.4px;top:966.8px;font-size:25.73px;line-height:25.73px;color:#555555;">12</div>
<div style="position:absolute;left:0.0px;top:1047.1px;width:72.0px;height:1.5px;background:#dcdcdc;"></div>
<div class="t" style="left:20.3px;top:1016.9px;font-size:25.73px;line-height:25.73px;color:#555555;">13</div>
<div style="position:absolute;left:0.0px;top:1097.2px;width:72.0px;height:1.5px;background:#dcdcdc;"></div>
<div class="t" style="left:20.1px;top:1067.0px;font-size:25.73px;line-height:25.73px;color:#555555;">14</div>
<div style="position:absolute;left:0.0px;top:1256.2px;width:72.0px;height:1.5px;background:#dcdcdc;"></div>
<div class="t" style="left:20.3px;top:1226.0px;font-size:25.73px;line-height:25.73px;color:#555555;">15</div>
<div style="position:absolute;left:0.0px;top:1327.8px;width:72.0px;height:1.5px;background:#dcdcdc;"></div>
<div class="t" style="left:20.3px;top:1297.5px;font-size:25.73px;line-height:25.73px;color:#555555;">16</div>
<div style="position:absolute;left:0.0px;top:1399.8px;width:72.0px;height:1.5px;background:#dcdcdc;"></div>
<div class="t" style="left:20.4px;top:1369.5px;font-size:25.73px;line-height:25.73px;color:#555555;">17</div>
<div style="position:absolute;left:0.0px;top:1471.8px;width:72.0px;height:1.5px;background:#dcdcdc;"></div>
<div class="t" style="left:20.3px;top:1441.5px;font-size:25.73px;line-height:25.73px;color:#555555;">18</div>
<div style="position:absolute;left:74.0px;top:466.0px;width:2133.7px;height:632.0px;background:#f4f4f2;"></div>
<div class="t" style="left:131.1px;top:462.8px;font-size:40.70px;line-height:40.70px;color:#5e4b63;transform:scaleX(1.0303);">Product Profit Per Item</div>
<div style="position:absolute;left:263.0px;top:566.2px;width:905.0px;height:2.0px;background:#d9d9d9;"></div>
<div class="t" style="left:125.8px;top:551.1px;font-size:32.85px;line-height:32.85px;color:#5e4b63;transform:scaleX(1.0200);">$16.00</div>
<div style="position:absolute;left:263.0px;top:623.2px;width:905.0px;height:2.0px;background:#d9d9d9;"></div>
<div class="t" style="left:125.8px;top:608.1px;font-size:32.85px;line-height:32.85px;color:#5e4b63;transform:scaleX(1.0200);">$14.00</div>
<div style="position:absolute;left:263.0px;top:680.2px;width:905.0px;height:2.0px;background:#d9d9d9;"></div>
<div class="t" style="left:125.8px;top:665.1px;font-size:32.85px;line-height:32.85px;color:#5e4b63;transform:scaleX(1.0200);">$12.00</div>
<div style="position:absolute;left:263.0px;top:737.2px;width:905.0px;height:2.0px;background:#d9d9d9;"></div>
<div class="t" style="left:125.8px;top:722.1px;font-size:32.85px;line-height:32.85px;color:#5e4b63;transform:scaleX(1.0200);">$10.00</div>
<div style="position:absolute;left:263.0px;top:794.2px;width:905.0px;height:2.0px;background:#d9d9d9;"></div>
<div class="t" style="left:144.5px;top:779.1px;font-size:32.85px;line-height:32.85px;color:#5e4b63;transform:scaleX(1.0200);">$8.00</div>
<div style="position:absolute;left:263.0px;top:851.4px;width:905.0px;height:2.0px;background:#d9d9d9;"></div>
<div class="t" style="left:144.5px;top:836.3px;font-size:32.85px;line-height:32.85px;color:#5e4b63;transform:scaleX(1.0200);">$6.00</div>
<div style="position:absolute;left:263.0px;top:908.6px;width:905.0px;height:2.0px;background:#d9d9d9;"></div>
<div class="t" style="left:144.5px;top:893.5px;font-size:32.85px;line-height:32.85px;color:#5e4b63;transform:scaleX(1.0200);">$4.00</div>
<div style="position:absolute;left:263.0px;top:965.8px;width:905.0px;height:2.0px;background:#d9d9d9;"></div>
<div class="t" style="left:144.5px;top:950.7px;font-size:32.85px;line-height:32.85px;color:#5e4b63;transform:scaleX(1.0200);">$2.00</div>
<div style="position:absolute;left:263.0px;top:1023.0px;width:905.0px;height:2.0px;background:#d9d9d9;"></div>
<div class="t" style="left:144.5px;top:1007.9px;font-size:32.85px;line-height:32.85px;color:#5e4b63;transform:scaleX(1.0200);">$0.00</div>
<div style="position:absolute;left:261.0px;top:1024.0px;width:2.0px;height:7.5px;background:#d9d9d9;"></div>
<div style="position:absolute;left:442.5px;top:1024.0px;width:2.0px;height:7.5px;background:#d9d9d9;"></div>
<div style="position:absolute;left:624.0px;top:1024.0px;width:2.0px;height:7.5px;background:#d9d9d9;"></div>
<div style="position:absolute;left:805.0px;top:1024.0px;width:2.0px;height:7.5px;background:#d9d9d9;"></div>
<div style="position:absolute;left:986.6px;top:1024.0px;width:2.0px;height:7.5px;background:#d9d9d9;"></div>
<div style="position:absolute;left:297.3px;top:617.2px;width:112.5px;height:405.8px;background:#e06c6c;"></div>
<div class="t" style="left:311.0px;top:1045.3px;font-size:25.44px;line-height:25.44px;color:#5e4b63;transform:scaleX(1.0150);">[Item 1]</div>
<div style="position:absolute;left:477.8px;top:656.0px;width:113.7px;height:367.0px;background:#654f66;"></div>
<div class="t" style="left:492.1px;top:1045.3px;font-size:25.44px;line-height:25.44px;color:#5e4b63;transform:scaleX(1.0150);">[Item 2]</div>
<div style="position:absolute;left:659.6px;top:675.5px;width:112.4px;height:347.5px;background:#88d1c0;"></div>
<div class="t" style="left:673.3px;top:1045.3px;font-size:25.44px;line-height:25.44px;color:#5e4b63;transform:scaleX(1.0150);">[Item 3]</div>
<div style="position:absolute;left:841.0px;top:852.8px;width:113.0px;height:170.2px;background:#f1cd88;"></div>
<div class="t" style="left:855.0px;top:1045.3px;font-size:25.44px;line-height:25.44px;color:#5e4b63;transform:scaleX(1.0150);">[Item 4]</div>
<div style="position:absolute;left:1022.5px;top:871.0px;width:113.2px;height:152.0px;background:#55b0c0;"></div>
<div class="t" style="left:1036.6px;top:1045.3px;font-size:25.44px;line-height:25.44px;color:#5e4b63;transform:scaleX(1.0150);">[Item 5]</div>
<div style="position:absolute;left:117.8px;top:466.0px;width:1.8px;height:633.2px;background:#217346;"></div>
<div style="position:absolute;left:1171.6px;top:466.0px;width:1.8px;height:633.2px;background:#217346;"></div>
<div style="position:absolute;left:118.7px;top:1097.8px;width:1053.8px;height:2.0px;background:#217346;"></div>
<svg style="position:absolute;left:100px;top:750px;" width="1090" height="370" viewBox="100 750 1090 370"><rect x="111.5" y="758.8" width="14.4" height="14.4" rx="2" fill="#e9edf3" stroke="#9a9a9a" stroke-width="1.8"/><rect x="1165.3" y="758.8" width="14.4" height="14.4" rx="2" fill="#e9edf3" stroke="#9a9a9a" stroke-width="1.8"/><rect x="638.3" y="1091.1" width="14.4" height="14.4" rx="2" fill="#e9edf3" stroke="#9a9a9a" stroke-width="1.8"/><circle cx="118.4" cy="1097.2" r="8.3" fill="#ffffff" stroke="#999999" stroke-width="2"/><circle cx="1171" cy="1096.8" r="8.3" fill="#ffffff" stroke="#999999" stroke-width="2"/></svg>
<div class="t" style="left:1514.6px;top:463.0px;font-size:40.70px;line-height:40.70px;color:#5e4b63;transform:scaleX(0.9928);">% Income Per Product</div>
<svg style="position:absolute;left:1550px;top:595px;" width="370" height="370" viewBox="1550 595 370 370"><path d="M1733.1 778.3 L1733.10 607.80 A170.5 170.5 0 0 1 1880.91 693.31 Z" fill="#e06c6c"/><path d="M1733.1 778.3 L1880.91 693.31 A170.5 170.5 0 0 1 1867.27 883.50 Z" fill="#654f66"/><path d="M1733.1 778.3 L1867.27 883.50 A170.5 170.5 0 0 1 1668.40 936.05 Z" fill="#88d1c0"/><path d="M1733.1 778.3 L1668.40 936.05 A170.5 170.5 0 0 1 1576.62 710.59 Z" fill="#f1cd88"/><path d="M1733.1 778.3 L1576.62 710.59 A170.5 170.5 0 0 1 1733.10 607.80 Z" fill="#55b0c0"/></svg>
<div class="t" style="left:1830.8px;top:592.6px;font-size:25.44px;line-height:25.44px;color:#5e4b63;transform:scaleX(1.0248);">[Item 1]</div>
<div class="t" style="left:1539.4px;top:597.8px;font-size:25.44px;line-height:25.44px;color:#5e4b63;transform:scaleX(1.0235);">[Item 5]</div>
<div class="t" style="left:1920.1px;top:780.8px;font-size:25.44px;line-height:25.44px;color:#5e4b63;transform:scaleX(1.0223);">[Item 2]</div>
<div class="t" style="left:1471.4px;top:841.4px;font-size:25.44px;line-height:25.44px;color:#5e4b63;transform:scaleX(1.0248);">[Item 4]</div>
<div class="t" style="left:1776.1px;top:957.2px;font-size:25.44px;line-height:25.44px;color:#5e4b63;transform:scaleX(1.0260);">[Item 3]</div>
<div class="t" style="left:121.1px;top:1216.3px;font-size:35.61px;line-height:35.61px;color:#5f4b63;transform:scaleX(1.0217);">Item</div>
<div class="t" style="left:452.6px;top:1172.3px;font-size:35.61px;line-height:35.61px;color:#5f4b63;transform:scaleX(0.9234);">Cost Per</div>
<div class="t" style="left:450.9px;top:1215.9px;font-size:35.61px;line-height:35.61px;color:#5f4b63;transform:scaleX(1.0264);">Item</div>
<div class="t" style="left:618.8px;top:1172.3px;font-size:35.61px;line-height:35.61px;color:#5f4b63;transform:scaleX(0.9327);">Percent</div>
<div class="t" style="left:618.8px;top:1215.9px;font-size:35.61px;line-height:35.61px;color:#5f4b63;transform:scaleX(0.9141);">Markup</div>
<div class="t" style="left:783.7px;top:1172.3px;font-size:35.61px;line-height:35.61px;color:#5f4b63;transform:scaleX(0.9805);">Total</div>
<div class="t" style="left:783.0px;top:1215.9px;font-size:35.61px;line-height:35.61px;color:#5f4b63;transform:scaleX(0.9071);">Sold</div>
<div class="t" style="left:909.2px;top:1172.3px;font-size:35.61px;line-height:35.61px;color:#5f4b63;transform:scaleX(0.9739);">Total</div>
<div class="t" style="left:907.4px;top:1215.9px;font-size:35.61px;line-height:35.61px;color:#5f4b63;transform:scaleX(0.9019);">Revenue</div>
<div class="t" style="left:1348.5px;top:1172.3px;font-size:35.61px;line-height:35.61px;color:#5f4b63;transform:scaleX(0.9192);">Shipping</div>
<div class="t" style="left:1348.2px;top:1215.9px;font-size:35.61px;line-height:35.61px;color:#5f4b63;transform:scaleX(1.0120);">Cost/Item</div>
<div class="t" style="left:1536.1px;top:1172.3px;font-size:35.61px;line-height:35.61px;color:#5f4b63;transform:scaleX(0.9787);">Profit per Item</div>
<div class="t" style="left:1536.8px;top:1215.9px;font-size:35.61px;line-height:35.61px;color:#5f4b63;transform:scaleX(0.9815);">(incl. shipping)</div>
<div class="t" style="left:1780.3px;top:1216.3px;font-size:35.61px;line-height:35.61px;color:#5f4b63;transform:scaleX(0.9263);">Returns</div>
<div class="t" style="left:1937.2px;top:1172.3px;font-size:35.61px;line-height:35.61px;color:#5f4b63;transform:scaleX(0.9949);">Total</div>
<div class="t" style="left:1934.9px;top:1215.9px;font-size:35.61px;line-height:35.61px;color:#5f4b63;transform:scaleX(0.9445);">Income</div>
<svg style="position:absolute;left:400px;top:1215px;" width="1780" height="50" viewBox="400 1215 1780 50"><rect x="415" y="1223.5" width="31.5" height="31" fill="#ffffff" stroke="#7a7a7a" stroke-width="2"/><path d="M423.8 1236.5 L437.8 1236.5 L430.8 1244 Z" fill="#6e6e6e"/><rect x="581.5" y="1223.5" width="31.5" height="31" fill="#ffffff" stroke="#7a7a7a" stroke-width="2"/><path d="M590.3 1236.5 L604.3 1236.5 L597.3 1244 Z" fill="#6e6e6e"/><rect x="745.6" y="1223.5" width="31.5" height="31" fill="#ffffff" stroke="#7a7a7a" stroke-width="2"/><path d="M754.4 1236.5 L768.4 1236.5 L761.4 1244 Z" fill="#6e6e6e"/><rect x="871.6" y="1223.5" width="31.5" height="31" fill="#ffffff" stroke="#7a7a7a" stroke-width="2"/><path d="M880.4 1236.5 L894.4 1236.5 L887.4 1244 Z" fill="#6e6e6e"/><rect x="1092" y="1223.5" width="31.5" height="31" fill="#ffffff" stroke="#7a7a7a" stroke-width="2"/><path d="M1100.8 1236.5 L1114.8 1236.5 L1107.8 1244 Z" fill="#6e6e6e"/><rect x="1499" y="1223.5" width="31.5" height="31" fill="#ffffff" stroke="#7a7a7a" stroke-width="2"/><path d="M1507.8 1236.5 L1521.8 1236.5 L1514.8 1244 Z" fill="#6e6e6e"/><rect x="1743.5" y="1223.5" width="31.5" height="31" fill="#ffffff" stroke="#7a7a7a" stroke-width="2"/><path d="M1752.3 1236.5 L1766.3 1236.5 L1759.3 1244 Z" fill="#6e6e6e"/><rect x="1899.4" y="1223.5" width="31.5" height="31" fill="#ffffff" stroke="#7a7a7a" stroke-width="2"/><path d="M1908.2 1236.5 L1922.2 1236.5 L1915.2 1244 Z" fill="#6e6e6e"/><rect x="2127.6" y="1223.5" width="31.5" height="31" fill="#ffffff" stroke="#7a7a7a" stroke-width="2"/><path d="M2136.4 1236.5 L2150.4 1236.5 L2143.4 1244 Z" fill="#6e6e6e"/></svg>
<div class="t" style="left:123.3px;top:1274.7px;font-size:36.34px;line-height:36.34px;color:#a48aaa;transform:scaleX(1.0400);">[Item 1]</div>
<div class="t" style="left:497.4px;top:1274.7px;font-size:36.34px;line-height:36.34px;color:#a48aaa;transform:scaleX(0.9900);">$10.00</div>
<div class="t" style="left:1437.5px;top:1274.7px;font-size:36.34px;line-height:36.34px;color:#a48aaa;transform:scaleX(0.9900);">$5.75</div>
<div class="t" style="left:1661.9px;top:1274.7px;font-size:36.34px;line-height:36.34px;color:#a48aaa;transform:scaleX(0.9900);">$14.25</div>
<div class="t" style="left:1907.8px;top:1274.7px;font-size:36.34px;line-height:36.34px;color:#a48aaa;transform:scaleX(0.9900);">2</div>
<div class="t" style="left:2025.5px;top:1274.7px;font-size:36.34px;line-height:36.34px;color:#a48aaa;transform:scaleX(0.9900);">$196.75</div>
<div class="t" style="left:123.3px;top:1346.2px;font-size:36.34px;line-height:36.34px;color:#a48aaa;transform:scaleX(1.0400);">[Item 2]</div>
<div class="t" style="left:497.4px;top:1346.2px;font-size:36.34px;line-height:36.34px;color:#a48aaa;transform:scaleX(0.9900);">$11.50</div>
<div class="t" style="left:1437.5px;top:1346.2px;font-size:36.34px;line-height:36.34px;color:#a48aaa;transform:scaleX(0.9900);">$5.75</div>
<div class="t" style="left:1661.9px;top:1346.2px;font-size:36.34px;line-height:36.34px;color:#a48aaa;transform:scaleX(0.9900);">$12.88</div>
<div class="t" style="left:1907.7px;top:1346.2px;font-size:36.34px;line-height:36.34px;color:#a48aaa;transform:scaleX(0.9900);">1</div>
<div class="t" style="left:2025.5px;top:1346.2px;font-size:36.34px;line-height:36.34px;color:#a48aaa;transform:scaleX(0.9900);">$224.63</div>
<div class="t" style="left:123.3px;top:1418.2px;font-size:36.34px;line-height:36.34px;color:#a48aaa;transform:scaleX(1.0400);">[Item 3]</div>
<div class="t" style="left:497.4px;top:1418.2px;font-size:36.34px;line-height:36.34px;color:#a48aaa;transform:scaleX(0.9900);">$13.00</div>
<div class="t" style="left:1437.5px;top:1418.2px;font-size:36.34px;line-height:36.34px;color:#a48aaa;transform:scaleX(0.9900);">$6.25</div>
<div class="t" style="left:1661.8px;top:1418.2px;font-size:36.34px;line-height:36.34px;color:#a48aaa;transform:scaleX(0.9900);">$12.20</div>
<div class="t" style="left:1907.4px;top:1418.2px;font-size:36.34px;line-height:36.34px;color:#a48aaa;transform:scaleX(0.9900);">0</div>
<div class="t" style="left:2025.4px;top:1418.2px;font-size:36.34px;line-height:36.34px;color:#a48aaa;transform:scaleX(0.9900);">$244.00</div>
<div class="t" style="left:123.3px;top:1490.2px;font-size:36.34px;line-height:36.34px;color:#a48aaa;transform:scaleX(1.0400);">[Item 4]</div>
<div class="t" style="left:517.4px;top:1490.2px;font-size:36.34px;line-height:36.34px;color:#a48aaa;transform:scaleX(0.9900);">$5.00</div>
<div class="t" style="left:1437.4px;top:1490.2px;font-size:36.34px;line-height:36.34px;color:#a48aaa;transform:scaleX(0.9900);">$3.50</div>
<div class="t" style="left:1681.8px;top:1490.2px;font-size:36.34px;line-height:36.34px;color:#a48aaa;transform:scaleX(0.9900);">$6.00</div>
<div class="t" style="left:1907.4px;top:1490.2px;font-size:36.34px;line-height:36.34px;color:#a48aaa;transform:scaleX(0.9900);">0</div>
<div class="t" style="left:2025.4px;top:1490.2px;font-size:36.34px;line-height:36.34px;color:#a48aaa;transform:scaleX(0.9900);">$300.00</div>
<div style="position:absolute;left:118.0px;top:1326.2px;width:2043.7px;height:3.0px;background:#dcdcd7;"></div>
<div style="position:absolute;left:118.0px;top:1398.3px;width:2043.7px;height:3.0px;background:#dcdcd7;"></div>
<div style="position:absolute;left:118.0px;top:1470.3px;width:2043.7px;height:3.0px;background:#dcdcd7;"></div>
<div style="position:absolute;left:0.0px;top:1510.0px;width:2880.0px;height:54.0px;background:#f4f4f4;"></div>
<div style="position:absolute;left:0.0px;top:1564.0px;width:2880.0px;height:1.5px;background:#d6d6d6;"></div>
<div style="position:absolute;left:0.0px;top:1565.5px;width:2880.0px;height:44.5px;background:#ffffff;"></div>
<svg style="position:absolute;left:10px;top:1515px;" width="560" height="45" viewBox="10 1515 560 45"><rect x="21" y="1528" width="2.2" height="15" fill="#6a6a6a"/><path d="M32.5 1528 L24 1535.5 L32.5 1543 Z" fill="#6a6a6a"/><path d="M85 1528 L76.5 1535.5 L85 1543 Z" fill="#6a6a6a"/><path d="M129.5 1528 L138 1535.5 L129.5 1543 Z" fill="#6a6a6a"/><path d="M181 1528 L189.5 1535.5 L181 1543 Z" fill="#6a6a6a"/><rect x="191.5" y="1528" width="2.2" height="15" fill="#6a6a6a"/><circle cx="532" cy="1535.5" r="15.3" fill="none" stroke="#8a8a8a" stroke-width="2.4"/><rect x="523.5" y="1533.8" width="17" height="3.6" fill="#6e6e6e"/><rect x="530.2" y="1527" width="3.6" height="17" fill="#6e6e6e"/></svg>
<div style="position:absolute;left:272.4px;top:1514.0px;width:1.6px;height:43.0px;background:#a8a8a8;"></div>
<div style="position:absolute;left:438.0px;top:1514.0px;width:1.6px;height:43.0px;background:#a8a8a8;"></div>
<div style="position:absolute;left:272.6px;top:1553.5px;width:166.8px;height:4.0px;background:#217346;"></div>
<div class="t" style="left:313.3px;top:1515.8px;font-size:28.34px;line-height:28.34px;color:#217346;font-weight:bold;transform:scaleX(0.8966);">SALES</div>
<svg style="position:absolute;left:2500px;top:1580px;" width="30" height="20" viewBox="2500 1580 30 20"><path d="M2509.5 1586.5 L2520.5 1586.5 L2515 1592.5 Z" fill="#555"/></svg>
<div class="t" style="left:2631.9px;top:1577.4px;font-size:24.27px;line-height:24.27px;color:#444444;transform:scaleX(0.8206);">HELP IMPROVE OFFICE</div>
<div style="position:absolute;left:580px;top:1256px;width:488.5px;height:270.5px;background:#fff;border:2px solid #c6c6c6"></div>
<div class="t" style="left:647.5px;top:1270.9px;font-size:27.62px;line-height:27.62px;color:#a8a8a8;transform:scaleX(0.9460);">Sort Ascending</div>
<div class="t" style="left:647.5px;top:1322.9px;font-size:27.62px;line-height:27.62px;color:#a8a8a8;transform:scaleX(0.9327);">Sort Descending</div>
<div style="position:absolute;left:622.0px;top:1364.0px;width:438.0px;height:2.0px;background:#e3e3e3;"></div>
<div class="t" style="left:647.4px;top:1379.2px;font-size:27.62px;line-height:27.62px;color:#a8a8a8;transform:scaleX(0.9540);">Clear Filter from &#x27;Cost Per Item&#x27;</div>
<div style="position:absolute;left:622.0px;top:1420.0px;width:438.0px;height:2.0px;background:#e3e3e3;"></div>
<div style="position:absolute;left:584.0px;top:1424.0px;width:484.0px;height:50.0px;background:#d4efe0;"></div>
<div class="t" style="left:646.6px;top:1434.5px;font-size:27.62px;line-height:27.62px;color:#444444;transform:scaleX(0.9398);">Number Filters</div>
<svg style="position:absolute;left:1038px;top:1438px;" width="16" height="18" viewBox="1038 1438 16 18"><path d="M1043.5 1442 L1050 1447 L1043.5 1452 Z" fill="#2f7bd0"/></svg>
<div class="t" style="left:646.5px;top:1486.9px;font-size:27.62px;line-height:27.62px;color:#444444;transform:scaleX(0.9736);">Filter...</div>
<svg style="position:absolute;left:590px;top:1265px;" width="40" height="150" viewBox="590 1265 40 150"><text x="593.5" y="1283.4" font-family="Liberation Serif" font-weight="bold" font-size="20" fill="#b7c9ea" textLength="18.2" lengthAdjust="spacingAndGlyphs">A</text><text x="597.4" y="1297.6000000000001" font-family="Liberation Serif" font-weight="bold" font-size="17" fill="#dbb7b7" textLength="10.6" lengthAdjust="spacingAndGlyphs">Z</text><path d="M614.8 1272 L614.8 1295 M609.8 1290.5 L614.8 1296 L619.8 1290.5" stroke="#b4b4b4" stroke-width="2" fill="none"/><text x="597.4" y="1333.5" font-family="Liberation Serif" font-weight="bold" font-size="17" fill="#dbb7b7" textLength="10.6" lengthAdjust="spacingAndGlyphs">Z</text><text x="593.5" y="1349.8000000000002" font-family="Liberation Serif" font-weight="bold" font-size="20" fill="#b7c9ea" textLength="18.2" lengthAdjust="spacingAndGlyphs">A</text><path d="M614.8 1324 L614.8 1347 M609.8 1342.5 L614.8 1348 L619.8 1342.5" stroke="#b4b4b4" stroke-width="2" fill="none"/><path d="M593.8 1375 L616.3 1375 L607.5 1387.5 L603 1387.5 Z" fill="#c8c8c8"/><path d="M603.5 1386 L603.5 1399 L608 1399" stroke="#c8c8c8" stroke-width="2" fill="none"/><path d="M607 1392.5 L622.5 1406.5 M622.5 1392.5 L607 1406.5" stroke="#f4b6a6" stroke-width="2.4"/></svg>
<div style="position:absolute;left:1070px;top:1124px;width:323px;height:482px;background:#fff;border:2px solid #c6c6c6"></div>
<div class="t" style="left:1138.0px;top:1138.9px;font-size:27.62px;line-height:27.62px;color:#444444;transform:scaleX(0.9019);">Equals...</div>
<div class="t" style="left:1137.9px;top:1190.4px;font-size:27.62px;line-height:27.62px;color:#444444;transform:scaleX(0.9260);">Does Not Equal...</div>
<div class="t" style="left:1138.7px;top:1246.6px;font-size:27.62px;line-height:27.62px;color:#444444;transform:scaleX(0.9272);">Greater Than...</div>
<div class="t" style="left:1137.9px;top:1297.9px;font-size:27.62px;line-height:27.62px;color:#444444;transform:scaleX(0.9240);">Less Than...</div>
<div class="t" style="left:1137.8px;top:1350.9px;font-size:27.62px;line-height:27.62px;color:#444444;transform:scaleX(0.9522);">Between...</div>
<div class="t" style="left:1139.4px;top:1406.3px;font-size:27.62px;line-height:27.62px;color:#444444;transform:scaleX(0.9759);">Top 10...</div>
<div class="t" style="left:1139.9px;top:1457.7px;font-size:27.62px;line-height:27.62px;color:#a8a8a8;transform:scaleX(0.9384);">Above Average</div>
<div class="t" style="left:1137.9px;top:1509.9px;font-size:27.62px;line-height:27.62px;color:#a8a8a8;transform:scaleX(0.9273);">Below Average</div>
<div class="t" style="left:1138.7px;top:1565.9px;font-size:27.62px;line-height:27.62px;color:#444444;transform:scaleX(0.9494);">Custom Filter...</div>
<div style="position:absolute;left:1112.0px;top:1231.6px;width:272.0px;height:2.0px;background:#e3e3e3;"></div>
<div style="position:absolute;left:1112.0px;top:1392.0px;width:272.0px;height:2.0px;background:#e3e3e3;"></div>
<div style="position:absolute;left:1112.0px;top:1551.7px;width:272.0px;height:2.0px;background:#e3e3e3;"></div>
</body></html>
